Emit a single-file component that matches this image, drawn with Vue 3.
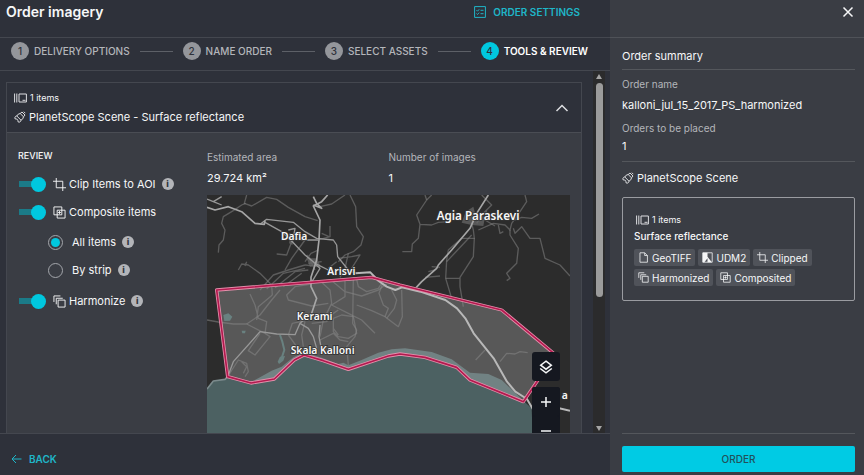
<script setup>
import { ref } from 'vue'

const steps = ['Delivery options', 'Name order', 'Select assets', 'Tools & review']
const current = 4

const clip = ref(true)
const composite = ref(true)
const harmonize = ref(true)
const mode = ref('all')

const chips = [
  { icon: 'file', label: 'GeoTIFF' },
  { icon: 'mask', label: 'UDM2' },
  { icon: 'crop', label: 'Clipped' },
  { icon: 'stack', label: 'Harmonized' },
  { icon: 'composite', label: 'Composited' },
]

const icons = {
  file: 'M2.500 1H8.500L12 4.500V13H2.500ZM8.500 1V4.500H12',
  mask: 'M1 1H13V13H1Z',
  crop: 'M3.500 0V10.500H14M0 3.500H10.500V14',
  stack: 'M5.500 5.500H13V13H5.500ZM3.500 10V3.500H10.500M1 7.500V1H8',
  composite: 'M1 1H9.500V9.500H1ZM4.500 4.500H13V13H4.500ZM7 5.500V8.500M5.500 7H8.500',
  satellite: 'M8 1 11 4 9.500 5.800 6.200 2.500ZM6.200 2.500 4.200 3.200 2.800 5 7 9.200 8.800 7.800 9.500 5.800M2.800 5C1 5.200.6 6.500 1 7.800L2.800 8 3.800 9.200 4.200 11C5.500 11.400 6.800 11 7 9.200M9.800.7 11.300 2.200',
  items: 'M.6.5V9.500M2.800.5V9.500M5 1H12.400V9H5ZM8.500 7.300H11.500',
}

const zone =
  'M35 300 500 262 585 285 890 360 1051 494 955 635 795 570 755 532 660 502 585 492 550 498 430 538 355 512 297 495 268 510 208 567 138 579 68 560Z'

const minorRoads = [
  'M125 15 118 40 140 48 185 22 215 28 250 52 300 80 338 92',
  'M435 15 452 50 455 110 475 140 468 165 445 185 420 195 400 215',
  'M345 50 380 42 420 15',
  'M85 62 55 80 50 100 60 120 55 150 42 165 40 188',
  'M85 62 110 45 122 40',
  'M375 108V140L345 148M350 130 372 140',
  'M395 215 370 235M240 240 260 205 300 150M215 192 245 195 262 150',
  'M100 240 110 222 130 225 165 250 200 285 202 315M125 215 120 228',
  'M165 300 205 255 250 240 300 225M185 297 235 250 300 235M210 293 270 245 310 240M235 290 290 250',
  'M400 205 440 200 465 195 440 235M430 190 420 235 405 262',
  'M202 315 160 350 155 390M135 312 150 345 160 385 185 395 180 430 125 402 85 402 40 396 6 390',
  'M225 300 200 330 165 375 125 402',
  'M318 282 270 290 245 315 250 330 320 348 370 340',
  'M345 272 375 300 380 340 355 390 345 440',
  'M375 268 420 305 470 318 520 300 545 282M420 265V320L380 345 430 370 470 390 510 430',
  'M445 265 443 400 455 420 450 440 425 470 430 525',
  'M455 345 500 362 540 380 580 410 592 380 590 300',
  'M455 268 460 290 485 305 520 295 530 280',
  'M535 275 522 310 535 345 550 355 540 380M560 300 575 330 568 355 545 385',
  'M385 385 410 375 445 380 455 430 430 445 400 440 385 425ZM385 415 400 435',
  'M250 435 262 400 300 392 305 370M300 395 290 435 295 470M250 435 275 470 320 480',
  'M180 430 195 440 150 495 130 482 165 430',
  'M68 560 100 510 125 520 130 545 120 560M110 515 125 530 115 550',
  'M345 450 385 430 405 450 430 455M320 400 365 395 385 370 400 360',
  'M300 215 318 190 340 180M305 195 335 225M310 220 350 215M315 210 330 240M300 225 345 230',
  'M660 15 665 30 635 75 645 103 640 145 622 162 620 185H592M645 103 680 105 700 97 735 95',
  'M680 15 665 30',
  'M830 15 860 45 835 70 815 100M845 60 840 90 870 108M800 100 805 120 808 145 770 145 730 180 725 210 722 265 740 325',
  'M808 145 805 200 765 262 765 290 775 350M722 265H765M725 215 800 135',
  'M960 15 965 35 945 65 920 100 915 120 900 105 865 100 820 120',
  'M930 90 950 82 980 85 1002 72M880 105 885 130 895 125',
  'M915 120 915 135 940 175 935 220 905 250 915 265 905 272',
  'M925 115 930 130 950 110 975 145 1005 145 1020 205 1065 225 1095 258',
  'M660 262 705 258M670 245 690 240M680 230 705 232',
  'M812 510 840 480 M885 515 905 490 930 492 945 485 968 488',
]

const midRoads = [
  'M165 103 185 88 265 97 300 125 335 145 385 150 395 165 398 200 430 240 451 250',
  'M180 97 230 125 262 155 300 195 330 220 370 240',
  'M330 222 345 235 330 260 318 280',
  'M250 120 270 115 265 145 300 150 340 150M255 130 262 155',
  'M6 27 25 35 50 20M25 35 50 45',
  'M68 560 85 515 165 425 215 432 270 434 285 400 320 370',
  'M285 400 310 415 325 440 335 475M345 405 342 440 350 480',
]

const mainRoads = [
  'M6 52 30 60 70 50 110 65 150 100 178 103 180 92',
  'M368 15 350 35 325 48 345 90 342 150 335 210 318 262 318 290 335 325 320 370',
  'M325 20 335 40 350 55 325 45',
  'M850 15 815 70 795 115 740 180 700 225 695 235 650 275 634 292',
]
</script>

<template>
  <div class="app">
    <main class="workspace">
      <header class="top">
        <h1>Order imagery</h1>
        <button class="settings" type="button">
          <svg width="12" height="12" viewBox="0 0 12 12" aria-hidden="true">
            <path d="M.6.6H11.400V11.400H.6ZM2.500 4.200 3.500 5.200 5.200 3.300M6.500 4.300H9.500M2.500 7.500 3.500 8.500 5.200 6.600M6.500 7.700H9.500" />
          </svg>
          Order settings
        </button>
      </header>

      <ol class="stepper">
        <template v-for="(step, i) in steps" :key="step">
          <li v-if="i" class="rule" aria-hidden="true"></li>
          <li class="step" :class="{ active: i + 1 === current }">
            <span class="dot">{{ i + 1 }}</span>{{ step }}
          </li>
        </template>
      </ol>

      <div class="scroll">
        <section class="card">
          <header class="card-head">
            <div>
              <p class="count">
                <svg width="13" height="10" viewBox="0 0 13 10" aria-hidden="true"><path :d="icons.items" /></svg>
                1 items
              </p>
              <h2>
                <svg width="12" height="12" viewBox="0 0 12 12" aria-hidden="true"><path :d="icons.satellite" /></svg>
                PlanetScope Scene - Surface reflectance
              </h2>
            </div>
            <button class="plain" type="button" aria-label="Collapse">
              <svg width="14" height="8" viewBox="0 0 14 8" aria-hidden="true">
                <path class="bold" d="M1.500 7 7 1.500 12.500 7" />
              </svg>
            </button>
          </header>

          <div class="card-body">
            <div class="review">
              <h3>Review</h3>
              <div class="option">
                <label>
                  <input v-model="clip" class="switch" type="checkbox" />
                  <svg width="13" height="13" viewBox="0 0 14 14" aria-hidden="true"><path :d="icons.crop" /></svg>
                  <span>Clip Items to AOI</span>
                </label>
                <button class="info" type="button" aria-label="About clipping">i</button>
              </div>
              <div class="option">
                <label>
                  <input v-model="composite" class="switch" type="checkbox" />
                  <svg width="13" height="13" viewBox="0 0 14 14" aria-hidden="true"><path :d="icons.composite" /></svg>
                  <span>Composite items</span>
                </label>
              </div>
              <div class="option sub">
                <label><input v-model="mode" class="radio" type="radio" name="mode" value="all" /><span>All items</span></label>
                <button class="info" type="button" aria-label="About all items">i</button>
              </div>
              <div class="option sub">
                <label><input v-model="mode" class="radio" type="radio" name="mode" value="strip" /><span>By strip</span></label>
                <button class="info" type="button" aria-label="About strips">i</button>
              </div>
              <div class="option">
                <label>
                  <input v-model="harmonize" class="switch" type="checkbox" />
                  <svg width="13" height="13" viewBox="0 0 14 14" aria-hidden="true"><path :d="icons.stack" /></svg>
                  <span>Harmonize</span>
                </label>
                <button class="info" type="button" aria-label="About harmonizing">i</button>
              </div>
            </div>

            <div class="preview">
              <dl class="stats">
                <div><dt>Estimated area</dt><dd>29.724 km²</dd></div>
                <div><dt>Number of images</dt><dd>1</dd></div>
              </dl>
              <div class="map">
                <svg class="chart" viewBox="6 15 1089 780" role="img" aria-label="Map of the order area">
                  <rect x="6" y="15" width="1089" height="780" fill="#2c2c2c" />
                  <path class="sea" d="M6 597 25 573 60 568 68 560 138 576 165 562 200 542 230 530 265 502 297 487 350 503 400 522 415 518 430 526 470 510 520 488 560 478 600 475 680 486 740 508 795 548 850 552 890 570 955 632 980 655 985 795H6Z" />
                  <path class="shore" d="M6 597 25 573 60 568 68 560" />
                  <path class="lake" d="M55 375 70 370 82 380 75 392 58 393ZM110 422 122 422 120 430 112 430ZM218 515 225 500 240 498 235 512 222 522Z" />
                  <path class="creek" d="M228 510 238 480 232 455 225 435" />
                  <path class="zone" :d="zone" />
                  <g class="minor"><path v-for="d in minorRoads" :key="d" :d="d" /></g>
                  <path class="town-block" d="M782 65 805 50 812 75 840 80 835 108 800 105 770 98ZM255 140 268 145 262 165 252 160ZM305 205 335 205 345 225 315 230Z" />
                  <g class="mid"><path v-for="d in midRoads" :key="d" :d="d" /></g>
                  <g class="main"><path v-for="d in mainRoads" :key="d" :d="d" /></g>
                  <path class="highway" d="M451 250 496 247 521 273 545 290 571 300 591 292 646 305 721 330 756 355 781 385 806 430 866 505 906 575 931 605 966 627 985 660M1050 652 1095 662" />
                  <path class="edge-outer" :d="zone" />
                  <path class="edge-inner" :d="zone" />
                  <g class="places">
                    <text x="228" y="149">Dafia</text>
                    <text x="367" y="254">Arisvi</text>
                    <text x="275" y="391">Kerami</text>
                    <text x="257" y="492">Skala Kalloni</text>
                    <text class="town" x="695" y="91">Agia Paraskevi</text>
                    <text x="1070" y="627">a</text>
                  </g>
                </svg>
                <div class="controls">
                  <button type="button" aria-label="Layers">
                    <svg width="14" height="14" viewBox="0 0 14 14" aria-hidden="true">
                      <path class="bold" d="M7 1.200 12.300 5.200 7 9.200 1.700 5.200ZM1.200 8.500 7 12.900 12.800 8.500" />
                    </svg>
                  </button>
                  <div class="zoom">
                    <button type="button" aria-label="Zoom in">
                      <svg width="12" height="12" viewBox="0 0 12 12" aria-hidden="true"><path class="bold" d="M6 1V11M1 6H11" /></svg>
                    </button>
                    <button type="button" aria-label="Zoom out">
                      <svg width="12" height="12" viewBox="0 0 12 12" aria-hidden="true"><path class="bold" d="M1 6H11" /></svg>
                    </button>
                  </div>
                </div>
              </div>
            </div>
          </div>
        </section>
        <div class="bar" aria-hidden="true">
          <i class="up"></i>
          <i class="thumb"></i>
          <i class="down"></i>
        </div>
      </div>

      <footer class="bottom">
        <button class="back" type="button">
          <svg width="11" height="10" viewBox="0 0 11 10" aria-hidden="true"><path d="M10.500 5H1M5 1 1 5 5 9" /></svg>
          Back
        </button>
      </footer>
    </main>

    <aside class="summary">
      <header class="close-row">
        <button class="plain" type="button" aria-label="Close">
          <svg width="12" height="12" viewBox="0 0 12 12" aria-hidden="true"><path class="bold" d="M1.500 1.500 10.500 10.500M10.500 1.500 1.500 10.500" /></svg>
        </button>
      </header>
      <div class="details">
        <h2 class="title">Order summary</h2>
        <dl class="facts">
          <dt>Order name</dt>
          <dd>kalloni_jul_15_2017_PS_harmonized</dd>
          <dt>Orders to be placed</dt>
          <dd>1</dd>
        </dl>
        <h3 class="scene">
          <svg width="12" height="12" viewBox="0 0 12 12" aria-hidden="true"><path :d="icons.satellite" /></svg>
          PlanetScope Scene
        </h3>
        <article class="bundle">
          <p class="count">
            <svg width="13" height="10" viewBox="0 0 13 10" aria-hidden="true"><path :d="icons.items" /></svg>
            1 items
          </p>
          <h4>Surface reflectance</h4>
          <ul class="chips">
            <li v-for="chip in chips" :key="chip.label">
              <svg width="11" height="11" viewBox="0 0 14 14" aria-hidden="true">
                <path :d="icons[chip.icon]" />
                <path v-if="chip.icon === 'mask'" class="solid" d="M1 1H7V6L12.500 13H7V8L3 13H1Z" />
              </svg>
              {{ chip.label }}
            </li>
          </ul>
        </article>
      </div>
      <footer class="place">
        <button class="order" type="button">Order</button>
      </footer>
    </aside>
  </div>
</template>

<style>
body {
  background: #2e3138;
}
</style>

<style scoped>
* {
  box-sizing: border-box;
  margin: 0;
  padding: 0;
}
.app {
  display: grid;
  grid-template-columns: minmax(0, 1fr) 254px;
  height: 100vh;
  overflow: hidden;
  background: #2e313a;
  color: #f6f7f8;
  font: 400 11px/16px Inter, "Liberation Sans", sans-serif;
}
button {
  border: 0;
  background: none;
  color: inherit;
  font: inherit;
  cursor: pointer;
}
ul, ol {
  list-style: none;
}
h1, h2, h3, h4 {
  font: inherit;
}
svg {
  display: block;
  flex: none;
}
svg:not(.chart) path {
  fill: none;
  stroke: currentColor;
  stroke-width: 1;
}
svg:not(.chart) path.bold {
  stroke-width: 1.5;
}
svg:not(.chart) path.solid {
  fill: currentColor;
  stroke: none;
}
.workspace,
.summary {
  display: flex;
  flex-direction: column;
  min-width: 0;
  min-height: 0;
}
.top {
  display: flex;
  align-items: center;
  justify-content: space-between;
  height: 38px;
  padding: 0 30px 13px 6px;
  border-bottom: 1px solid #44474f;
}
h1 {
  font-size: 14px;
  font-weight: 600;
}
.settings,
.back {
  display: flex;
  align-items: center;
  gap: 7px;
  color: #1fb6c8;
  font-size: 10px;
  font-weight: 600;
  text-transform: uppercase;
}
.stepper {
  display: flex;
  align-items: center;
  gap: 10px;
  height: 33px;
  padding: 0 22px 6px 11px;
  border-bottom: 1px solid #44474f;
}
.step {
  display: flex;
  align-items: center;
  gap: 5px;
  color: #b4b6bb;
  font-size: 10px;
  font-weight: 500;
  text-transform: uppercase;
  white-space: nowrap;
}
.dot {
  display: grid;
  place-items: center;
  width: 18px;
  height: 18px;
  border-radius: 50%;
  background: #94969b;
  color: #2e313a;
  font-size: 10px;
}
.active {
  color: #fff;
  font-weight: 600;
}
.active .dot {
  background: #00c8df;
  font-weight: 500;
}
.rule {
  flex: 1;
  height: 1px;
  background: #5d6067;
}
.scroll {
  display: flex;
  flex: 1;
  gap: 11px;
  min-height: 0;
  padding: 0 5px 0 6px;
  overflow: hidden;
}
.card {
  flex: 1;
  align-self: flex-start;
  min-width: 0;
  margin-top: 11px;
  border: 1px solid #44474f;
}
.card-head {
  display: flex;
  align-items: center;
  justify-content: space-between;
  padding: 7px 12px 7px 7px;
  border-bottom: 1px solid #4a4d54;
}
.count {
  display: flex;
  align-items: center;
  gap: 3px;
  font-size: 9px;
}
.card-head h2,
.scene {
  display: flex;
  align-items: center;
  gap: 3px;
  padding-top: 3px;
}
.card-head svg,
.scene svg,
.count svg {
  color: #dcdde0;
}
.plain {
  padding: 0;
}
.card-body {
  display: grid;
  grid-template-columns: 177px minmax(0, 1fr);
  gap: 12px;
  padding: 16px 11px;
  background: #3a3d44;
}
.review h3 {
  margin-bottom: 11px;
  font-size: 9px;
  font-weight: 500;
  line-height: 14px;
  text-transform: uppercase;
}
.option {
  display: flex;
  align-items: center;
  gap: 6px;
  height: 20px;
  margin-bottom: 8px;
  white-space: nowrap;
}
.option label {
  display: flex;
  align-items: center;
  gap: 3px;
}
.option.sub {
  margin: 0 0 8px 30px;
}
.option.sub label {
  gap: 9px;
}
.option:nth-child(3) {
  margin-bottom: 10px;
}
.option:nth-child(5) {
  margin-bottom: 11px;
}
.switch {
  display: flex;
  align-items: center;
  justify-content: flex-end;
  width: 28px;
  height: 15px;
  margin-right: 4px;
  appearance: none;
  background: linear-gradient(#1b7b88, #1b7b88) 1px 50% / 22px 6px no-repeat;
}
.switch:not(:checked) {
  justify-content: flex-start;
}
.switch::before {
  width: 15px;
  height: 15px;
  border-radius: 50%;
  background: #00c8df;
  content: "";
}
.radio {
  display: grid;
  place-items: center;
  width: 15px;
  height: 15px;
  border: 1px solid #a3a6ab;
  border-radius: 50%;
  appearance: none;
}
.radio:checked::before {
  width: 9px;
  height: 9px;
  border-radius: 50%;
  background: #00c8df;
  content: "";
}
.info {
  width: 12px;
  height: 12px;
  border-radius: 50%;
  background: #b3b5b9;
  color: #34373e;
  font-size: 9px;
  font-weight: 800;
  line-height: 12px;
}
.stats {
  display: grid;
  grid-template-columns: 1fr 1fr;
}
dt {
  color: #b4b6bb;
  font-size: 10px;
}
dd {
  padding-top: 5px;
}
.stats dd {
  margin-bottom: 9px;
}
.map {
  position: relative;
  overflow: hidden;
}
.chart {
  width: 100%;
  height: auto;
}
.chart path {
  fill: none;
  stroke-linejoin: round;
}
.chart .sea {
  fill: #4c6162;
}
.chart .zone {
  fill: #fff;
  fill-opacity: 0.21;
}
.chart .lake {
  fill: #41605f;
}
.chart .creek {
  stroke: #41605f;
  stroke-width: 6;
}
.chart .shore {
  stroke: #7b8a8c;
  stroke-width: 5;
}
.chart .town-block {
  fill: #6a6a6a;
  fill-opacity: 0.7;
}
.minor path {
  stroke: #8c8c8c;
  stroke-opacity: 0.5;
  stroke-width: 4;
}
.mid path {
  stroke: #989898;
  stroke-width: 4;
}
.main path {
  stroke: #a6a6a6;
  stroke-width: 5;
}
.chart .highway {
  stroke: #b8b8b8;
  stroke-width: 6;
}
.chart .edge-outer {
  stroke: #e48fab;
  stroke-width: 10;
}
.chart .edge-inner {
  stroke: #b31a4f;
  stroke-width: 5;
}
.places {
  fill: #f8f8f8;
  stroke: #333;
  stroke-width: 5;
  paint-order: stroke;
  font: 600 31px "Noto Sans", sans-serif;
}
.places .town {
  font-size: 35px;
}
.controls {
  position: absolute;
  top: 157px;
  right: 10px;
  display: grid;
  gap: 6px;
}
.controls button {
  display: grid;
  place-items: center;
  width: 28px;
  height: 29px;
  border-radius: 3px;
  background: #151820;
}
.zoom {
  border-radius: 3px;
  background: #151820;
}
.bar {
  display: flex;
  flex-direction: column;
  align-items: center;
  width: 12px;
  padding: 3px 0 2px;
  background: #2b2b2c;
}
.up,
.down {
  border: 3px solid transparent;
  border-top-width: 0;
  border-bottom: 5px solid #a5a5a5;
}
.down {
  margin-top: auto;
  border-top: 5px solid #a5a5a5;
  border-bottom-width: 0;
}
.thumb {
  width: 7px;
  height: 60%;
  margin-top: 4px;
  border-radius: 4px;
  background: #9b9b9b;
}
.bottom {
  display: flex;
  align-items: center;
  height: 42px;
  padding: 8px 11px 0;
  border-top: 1px solid #44474f;
}
.summary {
  background: #3a3d44;
}
.close-row {
  display: flex;
  justify-content: flex-end;
  height: 38px;
  padding: 6px 10px 20px;
  border-bottom: 1px solid #4f5258;
}
.details {
  flex: 1;
  margin: 0 9px 0 12px;
  border-bottom: 1px solid #54575c;
}
.title {
  padding: 10px 0 5px;
  border-bottom: 1px solid #54575c;
}
.facts {
  padding: 6px 0 5px;
  border-bottom: 1px solid #54575c;
}
.facts dd {
  padding: 5px 0 7px;
}
.facts dd:last-child {
  padding: 2px 0;
}
.scene {
  padding-top: 8px;
}
.bundle {
  margin-top: 11px;
  padding: 14px 11px;
  border: 1px solid #9a9ca1;
  border-radius: 2px;
}
.bundle .count {
  padding-left: 2px;
}
h4 {
  font-size: 10px;
  font-weight: 500;
}
.chips {
  display: flex;
  flex-wrap: wrap;
  gap: 3px;
  padding-top: 5px;
}
.chips li {
  display: flex;
  align-items: center;
  gap: 3px;
  height: 17px;
  padding: 0 4px;
  border-radius: 2px;
  background: #50535a;
  font-size: 10px;
}
.place {
  padding: 12px 9px 3px 12px;
}
.order {
  display: block;
  width: 100%;
  height: 26px;
  border-radius: 2px;
  background: #00cbe4;
  color: #20515b;
  font-size: 10px;
  font-weight: 500;
  text-transform: uppercase;
}
</style>
